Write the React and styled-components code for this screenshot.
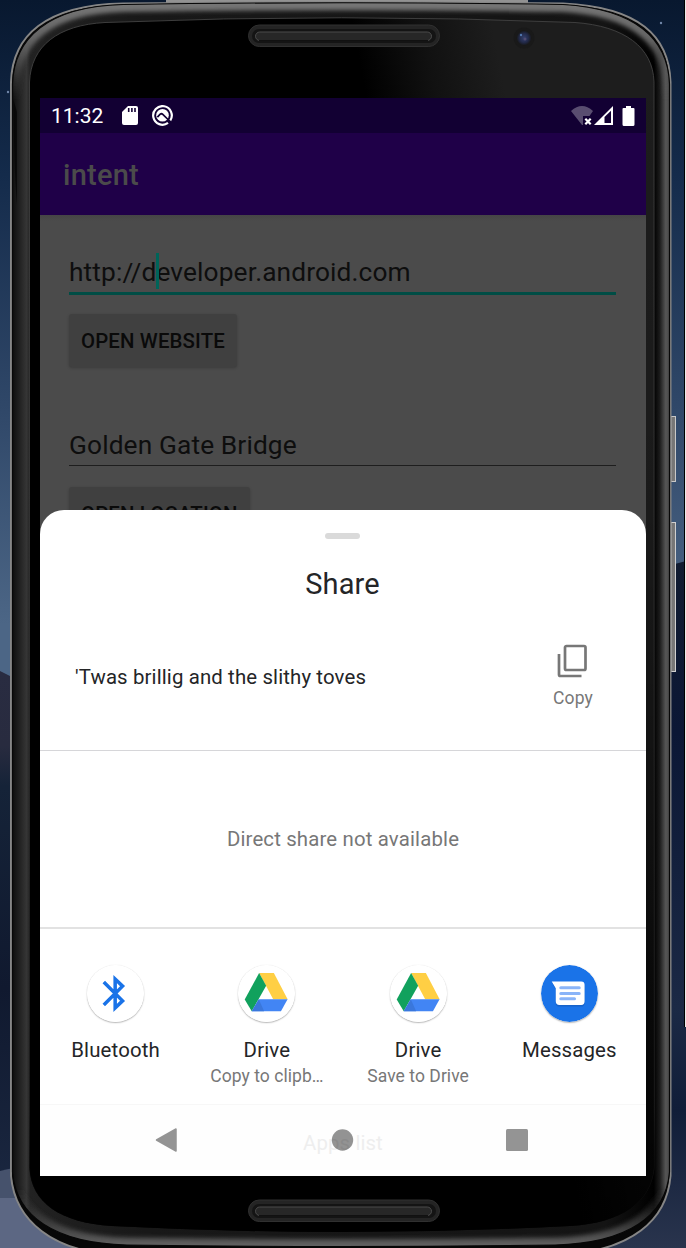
import React from "react";
import styled, { createGlobalStyle } from "styled-components";

const Global = createGlobalStyle`
  * { box-sizing: border-box; }
  body { margin: 0; background: #0c1b33; font-family: Roboto, "Liberation Sans", sans-serif; overflow: hidden; }
`;

const Desktop = styled.div`
  position: relative;
  width: 686px;
  height: 1248px;
  padding: 98px 40px 72px;
  overflow: hidden;
`;
const Artwork = styled.svg`
  position: absolute;
  inset: 0;
  z-index: 0;
  display: block;
`;
const Screen = styled.main`
  position: relative;
  width: 606px;
  height: 1078px;
  overflow: hidden;
  background: #4b4b4b;
`;
const StatusBar = styled.div`
  height: 35px;
  padding: 0 11px;
  background: #120033;
  color: #fff;
  display: flex;
  align-items: center;
`;
const Clock = styled.span`
  width: 71px;
  padding-top: 1px;
  font-size: 21px;
  line-height: 34px;
`;
const StatusIcon = styled.svg`
  display: block;
  flex: none;
  margin-left: ${(p) => p.$gap || 0}px;
`;
const Spacer = styled.div`
  flex: 1;
`;
const AppBar = styled.header`
  height: 82px;
  padding: 1px 23px 0;
  background: #1f0048;
  color: #4b4b4b;
  font-size: 29px;
  font-weight: 500;
  line-height: 82px;
  letter-spacing: 0.25px;
`;
const Form = styled.section`
  padding: 36px 30px 0 29px;
  display: flex;
  flex-direction: column;
  align-items: flex-start;
  background: linear-gradient(#454545, #4b4b4b 6px);
`;
const Field = styled.div`
  position: relative;
  width: 100%;
  height: ${(p) => (p.$active ? 44 : 42)}px;
  border-bottom: ${(p) => (p.$active ? "3px solid #004d45" : "1px solid #1e1e1e")};
  color: #0e0e0e;
  font-size: 26.3px;
  line-height: 43px;
  letter-spacing: 0.12px;
  white-space: nowrap;
  margin-bottom: ${(p) => (p.$active ? 19 : 21)}px;
`;
const Caret = styled.i`
  position: absolute;
  left: 87px;
  top: 2px;
  width: 3px;
  height: 36px;
  background: #006459;
`;
const FormButton = styled.button`
  height: 53px;
  padding: 0 12px;
  border: 0;
  border-radius: 3px;
  background: #404040;
  box-shadow: 0 1px 3px rgba(0, 0, 0, 0.22);
  color: #0a0a0a;
  font: 500 20.4px/54px Roboto, "Liberation Sans", sans-serif;
  letter-spacing: 0.14px;
  white-space: nowrap;
  margin-bottom: 57px;
`;
const Sheet = styled.section`
  position: absolute;
  left: 0;
  right: 0;
  top: 412px;
  bottom: 0;
  border-radius: 24px 24px 0 0;
  background: #fff;
  color: #242527;
  display: flex;
  flex-direction: column;
`;
const Handle = styled.div`
  flex: none;
  width: 35px;
  height: 6px;
  margin: 23px 0 0 285px;
  border-radius: 3px;
  background: #dadada;
`;
const SheetTitle = styled.h1`
  flex: none;
  margin: 25px 1px 0 0;
  height: 40px;
  font-size: 29px;
  font-weight: 400;
  line-height: 40px;
  letter-spacing: 0.15px;
  text-align: center;
`;
const Preview = styled.div`
  flex: none;
  height: 147px;
  padding: 0 41px 0 35px;
  border-bottom: 1px solid #d6d6d9;
  display: flex;
  justify-content: space-between;
`;
const PreviewText = styled.p`
  margin: 59px 0 0;
  font-size: 20.4px;
  line-height: 28px;
  letter-spacing: 0.13px;
`;
const CopyAction = styled.div`
  width: 64px;
  padding-top: 40px;
  display: flex;
  flex-direction: column;
  align-items: center;
  color: #777;
  font-size: 17.5px;
  line-height: 22px;
  letter-spacing: 0.1px;
`;
const CopyIcon = styled.svg`
  display: block;
  margin: 0 3px 9px 0;
`;
const DirectShare = styled.div`
  flex: none;
  height: 178px;
  border-bottom: 2px solid #e2e2e2;
  color: #777;
  font-size: 20.4px;
  line-height: 176px;
  letter-spacing: 0.15px;
  text-align: center;
`;
const Targets = styled.div`
  flex: none;
  display: grid;
  grid-template-columns: repeat(4, 1fr);
  height: 175px;
  padding: 36px 1px 0 0;
`;
const Target = styled.div`
  display: flex;
  flex-direction: column;
  align-items: center;
  white-space: nowrap;
`;
const TargetIcon = styled.svg`
  display: block;
  width: 57px;
  height: 57px;
  border-radius: 50%;
  box-shadow: 0 1px 1.5px rgba(0, 0, 0, 0.28), 0 0 1px rgba(0, 0, 0, 0.12);
`;
const TargetName = styled.div`
  margin-top: 14px;
  font-size: 20.4px;
  line-height: 28px;
  letter-spacing: 0.15px;
`;
const TargetNote = styled.div`
  font-size: 17.5px;
  line-height: 24px;
  letter-spacing: 0.05px;
  color: #777;
`;
const NavBar = styled.nav`
  position: relative;
  flex: none;
  height: 72px;
  overflow: hidden;
  border-top: 1px solid #f7f7f7;
  background: #fefefe;
`;
const AppsList = styled.div`
  color: #eee;
  font-size: 20.4px;
  line-height: 76px;
  letter-spacing: 0.1px;
  text-align: center;
`;
const NavIcons = styled.svg`
  position: absolute;
  inset: 0;
  display: block;
`;

const OUTER =
  "M11 82C12.500 36 45 5 123 3.500Q343 1 563 3.500C639 7 669 36 670.500 82V1176C667 1220 632 1251 560 1255H122C52 1253 15 1220 11 1176Z";
const RIM =
  "M12.500 84C14 39 47 6.500 123 4.500Q343 1 563 4.500C636 9 668 39 669.500 84V1172C666 1216 628 1243 555 1245Q343 1248 127 1245C54 1243 16 1216 12.500 1172Z";
const FACE =
  "M29.500 82C31 46 58 25 105 22.500Q343 13 575 22.500C624 26 653 47 654 82V1168C651 1202 622 1223 570 1226Q343 1238 112 1226C60 1223 31 1202 29.500 1168Z";

function Grille({ y }) {
  return (
    <g>
      <rect x="248.500" y={y} width="191" height="21.500" rx="10.750" fill="#242424" stroke="#303030" />
      <rect x="252" y={y + 4} width="184" height="14" rx="7" fill="#141414" />
      <rect x="255.500" y={y + 7} width="176" height="8.500" rx="4.250" fill="#272727" stroke="#4b4b4b" />
      <path d={`M259 ${y + 15.5}H428`} stroke="#111" />
    </g>
  );
}

function DeviceArtwork() {
  return (
    <Artwork width="686" height="1248" viewBox="0 0 686 1248">
      <defs>
        <linearGradient id="sky" x1="0" y1="0" x2="0" y2="1">
          <stop offset="0" stopColor="#08182f" />
          <stop offset=".14" stopColor="#142b4b" />
          <stop offset=".33" stopColor="#304869" />
          <stop offset=".5" stopColor="#4c6686" />
          <stop offset="1" stopColor="#4c6686" />
        </linearGradient>
        <linearGradient id="hillL" x1="0" y1="0" x2="0" y2="1">
          <stop offset="0" stopColor="#292c41" />
          <stop offset=".13" stopColor="#282b3f" />
          <stop offset=".2" stopColor="#152338" />
          <stop offset=".55" stopColor="#10192f" />
          <stop offset="1" stopColor="#1d2b45" />
        </linearGradient>
        <linearGradient id="hillR" x1="0" y1="0" x2="0" y2="1">
          <stop offset="0" stopColor="#111c31" />
          <stop offset=".25" stopColor="#0b1735" />
          <stop offset=".65" stopColor="#1b2945" />
          <stop offset=".8" stopColor="#101d38" />
          <stop offset="1" stopColor="#29344d" />
        </linearGradient>
        <linearGradient id="rimX" gradientUnits="userSpaceOnUse" x1="12" y1="0" x2="671" y2="0">
          <stop offset="0" stopColor="#0d0d0d" />
          <stop offset=".009" stopColor="#1d1d1d" />
          <stop offset=".022" stopColor="#353535" />
          <stop offset=".028" stopColor="#222" />
          <stop offset=".2" stopColor="#181818" />
          <stop offset=".9" stopColor="#141414" />
          <stop offset=".974" stopColor="#000" />
          <stop offset=".983" stopColor="#1c1c1c" />
          <stop offset=".992" stopColor="#555" />
          <stop offset="1" stopColor="#444" />
        </linearGradient>
        <linearGradient id="bevel" gradientUnits="userSpaceOnUse" x1="0" y1="0" x2="0" y2="1248">
          <stop offset="0" stopColor="#777" />
          <stop offset=".03" stopColor="#666" />
          <stop offset=".08" stopColor="#555" stopOpacity="0" />
          <stop offset=".95" stopColor="#333" stopOpacity="0" />
          <stop offset="1" stopColor="#666" />
        </linearGradient>
        <linearGradient id="face" gradientUnits="userSpaceOnUse" x1="365" y1="90" x2="500" y2="64">
          <stop offset="0" stopColor="#000" />
          <stop offset=".5" stopColor="#111" />
          <stop offset="1" stopColor="#1d1d1d" />
        </linearGradient>
        <linearGradient id="fade" x1="0" y1="0" x2="0" y2="1">
          <stop offset="0" stopColor="#000" stopOpacity="0" />
          <stop offset=".4" stopColor="#000" stopOpacity=".1" />
          <stop offset=".9" stopColor="#000" stopOpacity=".75" />
          <stop offset="1" stopColor="#000" stopOpacity=".8" />
        </linearGradient>
        <linearGradient id="edge" x1="0" y1="0" x2="0" y2="1">
          <stop offset="0" stopColor="#3d3d3d" />
          <stop offset=".9" stopColor="#2a2a2a" />
          <stop offset="1" stopColor="#0a0a0a" stopOpacity="0" />
        </linearGradient>
        <radialGradient id="lens">
          <stop offset="0" stopColor="#35406d" />
          <stop offset=".6" stopColor="#222a4a" />
          <stop offset="1" stopColor="#171717" />
        </radialGradient>
        <filter id="soften" x="-5%" y="-5%" width="110%" height="110%">
          <feGaussianBlur stdDeviation="2.200" />
        </filter>
        <clipPath id="rimClip"><path d={RIM} /></clipPath>
      </defs>
      <rect width="686" height="1248" fill="url(#sky)" />
      <path d="M0 671L12 677V1248H0Z" fill="url(#hillL)" />
      <path d="M0 1171Q8 1169 14 1168L120 1248H0Z" fill="#46526c" />
      <path d="M0 1198L16 1198L100 1248H0Z" fill="#5c6783" />
      <path d="M660 568L686 561V1248H560Z" fill="url(#hillR)" />
      <circle cx="8" cy="92" r="1.200" fill="#7087a8" />
      <circle cx="661" cy="23" r="1.200" fill="#7087a8" />
      <rect x="166" y="0" width="362" height="3" fill="#929292" />
      <rect x="671" y="416.500" width="4.500" height="65" fill="#777" stroke="#c8c8c8" />
      <rect x="671" y="522.500" width="4.500" height="149" fill="#777" stroke="#d0d0d0" />
      <path d={OUTER} fill="#070707" stroke="#868686" strokeWidth="2" />
      <path d={RIM} fill="url(#rimX)" />
      <g clipPath="url(#rimClip)">
        <path d={RIM} fill="none" stroke="url(#bevel)" strokeWidth="15" filter="url(#soften)" />
        <path d="M13.500 100C14 158 15 180 17 205V112Z" fill="#000" opacity=".6" />
      </g>
      <path d={RIM} fill="none" stroke="#070707" strokeWidth="1.200" />
      <path d={FACE} fill="url(#face)" stroke="url(#edge)" />
      <path d={FACE} fill="url(#fade)" />
      <Grille y={25} />
      <Grille y={1200} />
      <circle cx="524" cy="38" r="10.500" fill="#191919" />
      <circle cx="524" cy="38" r="7.500" fill="url(#lens)" />
      <circle cx="521" cy="35" r="1.200" fill="#5075ad" />
      <circle cx="525" cy="39" r="1.500" fill="#514c72" />
      <rect x="684" width="1" height="1027" fill="#000" />
      <rect x="685" width="1" height="1027" fill="#e8e8e8" />
    </Artwork>
  );
}

function DriveIcon() {
  return (
    <TargetIcon viewBox="0 0 170 170">
      <circle cx="85" cy="85" r="85" fill="#fff" />
      <path d="M63 24H107L148 102H105Z" fill="#ffcf44" />
      <path d="M63 24L84 62L41 138L20 103Z" fill="#11a15d" />
      <path d="M62 102H148L128 138H41Z" fill="#4285f4" />
      <path d="M62 102L78 138H41Z" fill="#3a77dc" />
    </TargetIcon>
  );
}
function BluetoothIcon() {
  return (
    <TargetIcon viewBox="0 0 170 170">
      <circle cx="85" cy="85" r="85" fill="#fff" />
      <path d="M50 51L106 107L84 128V42L106 63L50 119" fill="none" stroke="#1a73e8" strokeWidth="10.500" strokeMiterlimit="8" />
    </TargetIcon>
  );
}
function MessagesIcon() {
  return (
    <TargetIcon viewBox="0 0 170 170">
      <circle cx="85" cy="85" r="85" fill="#1a73e8" />
      <path d="M34 54H120Q130 54 130 64V113Q130 124 120 124H55Q44 124 44 113V73Z" fill="#1459b8" opacity=".6" />
      <path d="M32 49H120Q130 49 130 59V108Q130 119 120 119H55Q44 119 44 108V69Z" fill="#fff" />
      <path d="M59 68H114M59 85H114M59 101H100" stroke="#8ab4f8" strokeWidth="9" strokeLinecap="round" />
    </TargetIcon>
  );
}

const targets = [
  { name: "Bluetooth", Icon: BluetoothIcon },
  { name: "Drive", note: "Copy to clipb…", Icon: DriveIcon },
  { name: "Drive", note: "Save to Drive", Icon: DriveIcon },
  { name: "Messages", Icon: MessagesIcon },
];

export default function App() {
  return (
    <Desktop>
      <Global />
      <DeviceArtwork />
      <Screen>
        <StatusBar>
          <Clock>11:32</Clock>
          <StatusIcon width="16" height="19" viewBox="0 0 16 19">
            <path d="M6 0H14Q16 0 16 2V17Q16 19 14 19H2Q0 19 0 17V6Z" fill="#fff" />
            <path d="M6.700 2V6M9.900 2V6M13 2V6" stroke="#120033" strokeWidth="1.600" />
          </StatusIcon>
          <StatusIcon $gap={14} width="21" height="21" viewBox="0 0 21 21">
            <path d="M16 17.900A9.300 9.300 0 1 1 18.200 15.600" fill="none" stroke="#fff" strokeWidth="2.200" />
            <circle cx="10.500" cy="10.200" r="6.300" fill="#fff" />
            <path d="M5.400 12.200L8.200 9.200Q9.500 8.200 10.800 9.400L18.600 17" fill="none" stroke="#120033" strokeWidth="1.700" />
          </StatusIcon>
          <Spacer />
          <StatusIcon width="23" height="20" viewBox="0 0 23 20">
            <path d="M0 5Q11-5 22 5L18.500 10H12V19H11Z" fill="#594d70" />
            <path d="M14.300 12.800L19.700 18.200M19.700 12.800L14.300 18.200" stroke="#fff" strokeWidth="2.200" />
          </StatusIcon>
          <StatusIcon width="19" height="19" viewBox="0 0 19 19">
            <path d="M0 19L19 0V19Z" fill="#fff" />
            <path d="M10.500 11L17 4.700V17H10.500Z" fill="#120033" />
          </StatusIcon>
          <StatusIcon $gap={9} width="13" height="20" viewBox="0 0 13 20">
            <path d="M4 0H9V2H11.500Q12.500 2 12.500 3V18.500Q12.500 20 11 20H2Q.5 20 .5 18.500V3Q.5 2 1.500 2H4Z" fill="#fff" />
          </StatusIcon>
        </StatusBar>
        <AppBar>intent</AppBar>
        <Form>
          <Field $active>
            http://developer.android.com
            <Caret />
          </Field>
          <FormButton>OPEN WEBSITE</FormButton>
          <Field>Golden Gate Bridge</Field>
          <FormButton>OPEN LOCATION</FormButton>
        </Form>
        <Sheet>
          <Handle />
          <SheetTitle>Share</SheetTitle>
          <Preview>
            <PreviewText>'Twas brillig and the slithy toves</PreviewText>
            <CopyAction>
              <CopyIcon width="30" height="34" viewBox="0 0 30 34">
                <rect x="8" y="2" width="20.500" height="24" rx="1.500" fill="none" stroke="#777" strokeWidth="2.700" />
                <path d="M2 10V30.500Q2 32 3.500 32H24.500" fill="none" stroke="#777" strokeWidth="2.700" />
              </CopyIcon>
              Copy
            </CopyAction>
          </Preview>
          <DirectShare>Direct share not available</DirectShare>
          <Targets>
            {targets.map(({ name, note, Icon }, i) => (
              <Target key={i}>
                <Icon />
                <TargetName>{name}</TargetName>
                {note && <TargetNote>{note}</TargetNote>}
              </Target>
            ))}
          </Targets>
          <NavBar>
            <AppsList>Apps list</AppsList>
            <NavIcons width="606" height="71" viewBox="0 0 606 71">
              <path d="M116.500 35L136 24V46Z" fill="#949494" stroke="#949494" strokeWidth="1.500" strokeLinejoin="round" />
              <circle cx="302.500" cy="35" r="10.700" fill="#000" opacity=".42" />
              <rect x="466" y="24" width="22" height="22" rx="1.500" fill="#949494" />
            </NavIcons>
          </NavBar>
        </Sheet>
      </Screen>
    </Desktop>
  );
}
